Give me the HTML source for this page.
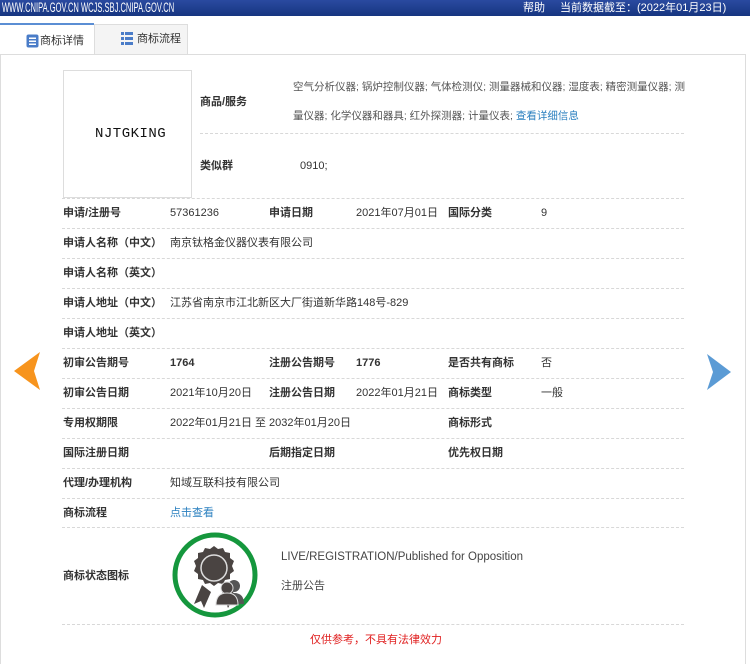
<!DOCTYPE html>
<html><head><meta charset="utf-8"><style>
*{margin:0;padding:0;box-sizing:border-box}
body{width:750px;height:657px;background:#fff;font-family:"Liberation Sans","Noto Sans CJK SC",sans-serif;font-size:11px;color:#333;position:relative;overflow:hidden}
span{line-height:14px}
.top{position:absolute;left:0;top:0;width:750px;height:16px;background:linear-gradient(#2a4aa0,#163580);color:#fff;font-size:11px}
.top span{line-height:16px}
.a{position:absolute;white-space:nowrap}
.b{font-weight:bold}
.hl{position:absolute;left:62px;width:622px;border-top:1px dashed #d8d8d8;height:0}
.lbl{position:absolute;font-weight:bold;white-space:nowrap}
</style></head><body>
<div class="top"><span class="a" style="left:2px;top:-1px;transform:scaleX(0.56);transform-origin:0 0;font-size:13.5px;line-height:17px">WWW.CNIPA.GOV.CN WCJS.SBJ.CNIPA.GOV.CN</span><span class="a" style="left:523px">帮助</span><span class="a" style="left:560px">当前数据截至：(2022年01月23日)</span></div>
<div class="a" style="left:0;top:23px;width:94px;height:31px;background:#fff;border-top:2px solid #5b8ed4"></div>
<div class="a" style="left:94px;top:24px;width:94px;height:30px;background:#f4f4f4;border:1px solid #ddd;border-bottom:none"></div>
<svg class="a" style="left:26px;top:34px" width="13" height="14"><rect x="0.5" y="0.5" width="12" height="13" rx="2" fill="#4a7cc8"/><rect x="3" y="3.5" width="7" height="1.5" fill="#fff"/><rect x="3" y="6.5" width="7" height="1.5" fill="#fff"/><rect x="3" y="9.5" width="7" height="1.5" fill="#fff"/></svg>
<span class="a" style="left:40px;top:34px;font-size:11px">商标详情</span>
<svg class="a" style="left:121px;top:32px" width="12" height="13"><rect x="0" y="0" width="3" height="3" fill="#4a7cc8"/><rect x="4" y="0" width="8" height="3" fill="#4a7cc8"/><rect x="0" y="5" width="3" height="3" fill="#4a7cc8"/><rect x="4" y="5" width="8" height="3" fill="#4a7cc8"/><rect x="0" y="10" width="3" height="3" fill="#4a7cc8"/><rect x="4" y="10" width="8" height="3" fill="#4a7cc8"/></svg>
<span class="a" style="left:137px;top:32px">商标流程</span>
<div class="a" style="left:0;top:54px;width:746px;height:610px;border:1px solid #ddd;border-bottom:none"></div>
<div class="a" style="left:63px;top:70px;width:129px;height:128px;border:1px solid #ddd"></div>
<span class="a" style="left:95px;top:127px;font-family:'Liberation Mono',monospace;font-size:14px;color:#111;letter-spacing:0.5px">NJTGKING</span>
<span class="lbl" style="left:200px;top:95px">商品/服务</span>
<span class="a" style="left:293px;top:80px;font-size:10.5px;color:#555">空气分析仪器; 锅炉控制仪器; 气体检测仪; 测量器械和仪器; 湿度表; 精密测量仪器; 测</span>
<span class="a" style="left:293px;top:109px;font-size:10.5px;color:#555">量仪器; 化学仪器和器具; 红外探测器; 计量仪表; <span style="color:#2a7fbf">查看详细信息</span></span>
<div class="hl" style="top:133px;left:200px;width:484px"></div>
<span class="lbl" style="left:200px;top:159px">类似群</span>
<span class="a" style="left:300px;top:159px">0910;</span>
<div class="hl" style="top:198px"></div>
<span class="lbl" style="left:63px;top:206px">申请/注册号</span><span class="a" style="left:170px;top:206px">57361236</span><span class="lbl" style="left:269px;top:206px">申请日期</span><span class="a" style="left:356px;top:206px">2021年07月01日</span><span class="lbl" style="left:448px;top:206px">国际分类</span><span class="a" style="left:541px;top:206px">9</span>
<div class="hl" style="top:228px"></div>
<span class="lbl" style="left:63px;top:236px">申请人名称（中文）</span><span class="a" style="left:170px;top:236px">南京钛格金仪器仪表有限公司</span>
<div class="hl" style="top:258px"></div>
<span class="lbl" style="left:63px;top:266px">申请人名称（英文）</span>
<div class="hl" style="top:288px"></div>
<span class="lbl" style="left:63px;top:296px">申请人地址（中文）</span><span class="a" style="left:170px;top:296px">江苏省南京市江北新区大厂街道新华路148号-829</span>
<div class="hl" style="top:318px"></div>
<span class="lbl" style="left:63px;top:326px">申请人地址（英文）</span>
<div class="hl" style="top:348px"></div>
<span class="lbl" style="left:63px;top:356px">初审公告期号</span><span class="a b" style="left:170px;top:356px">1764</span><span class="lbl" style="left:269px;top:356px">注册公告期号</span><span class="a b" style="left:356px;top:356px">1776</span><span class="lbl" style="left:448px;top:356px">是否共有商标</span><span class="a" style="left:541px;top:356px">否</span>
<div class="hl" style="top:378px"></div>
<span class="lbl" style="left:63px;top:386px">初审公告日期</span><span class="a" style="left:170px;top:386px">2021年10月20日</span><span class="lbl" style="left:269px;top:386px">注册公告日期</span><span class="a" style="left:356px;top:386px">2022年01月21日</span><span class="lbl" style="left:448px;top:386px">商标类型</span><span class="a" style="left:541px;top:386px">一般</span>
<div class="hl" style="top:408px"></div>
<span class="lbl" style="left:63px;top:416px">专用权期限</span><span class="a" style="left:170px;top:416px">2022年01月21日 至 2032年01月20日</span><span class="lbl" style="left:448px;top:416px">商标形式</span>
<div class="hl" style="top:438px"></div>
<span class="lbl" style="left:63px;top:446px">国际注册日期</span><span class="lbl" style="left:269px;top:446px">后期指定日期</span><span class="lbl" style="left:448px;top:446px">优先权日期</span>
<div class="hl" style="top:468px"></div>
<span class="lbl" style="left:63px;top:476px">代理/办理机构</span><span class="a" style="left:170px;top:476px">知域互联科技有限公司</span>
<div class="hl" style="top:498px"></div>
<span class="lbl" style="left:63px;top:506px">商标流程</span><span class="a" style="left:170px;top:506px;color:#2a7fbf">点击查看</span>
<div class="hl" style="top:527px"></div>
<span class="lbl" style="left:63px;top:569px">商标状态图标</span>
<svg class="a" style="left:170px;top:530px" width="90" height="90" viewBox="0 0 90 90">
<circle cx="45" cy="45" r="40" fill="#fff" stroke="#15973d" stroke-width="5"/>
<path d="M32 55 L24 74 L31 71 L34 78 L41 62 Z M52 62 L58 78 L62 71 L69 74 L60 56 Z" fill="#4a4442"/>
<path d="M44 16 l4 3 5-1 2 4 5 1 0 5 4 3-2 5 2 5-4 3 0 5-5 1-2 4-5-1-4 3-4-3-5 1-2-4-5-1 0-5-4-3 2-5-2-5 4-3 0-5 5-1 2-4 5 1z" fill="#4a4442"/>
<circle cx="44" cy="38" r="13" fill="#4a4442" stroke="#ddd" stroke-width="1.5"/>
<circle cx="64" cy="56" r="6" fill="#555"/><path d="M54 74 q0-11 10-11 q10 0 10 11z" fill="#555"/>
<circle cx="57" cy="58" r="6" fill="#4a4442" stroke="#ddd" stroke-width="1"/><path d="M46 75 q0-12 11-12 q11 0 11 12z" fill="#4a4442" stroke="#ddd" stroke-width="1"/>
</svg>
<span class="a" style="left:281px;top:550px;font-size:11.5px;color:#444">LIVE/REGISTRATION/Published for Opposition</span>
<span class="a" style="left:281px;top:579px;color:#444">注册公告</span>
<div class="hl" style="top:624px"></div>
<span class="a" style="left:310px;top:633px;color:#e02020">仅供参考，不具有法律效力</span>
<svg class="a" style="left:14px;top:352px" width="26" height="38"><path d="M26 0 L0 19 L26 38 L20 19 Z" fill="#f7941d"/></svg>
<svg class="a" style="left:707px;top:354px" width="26" height="36"><path d="M0 0 L24 18 L0 36 L6 18 Z" fill="#5b9bd5"/></svg>
</body></html>
